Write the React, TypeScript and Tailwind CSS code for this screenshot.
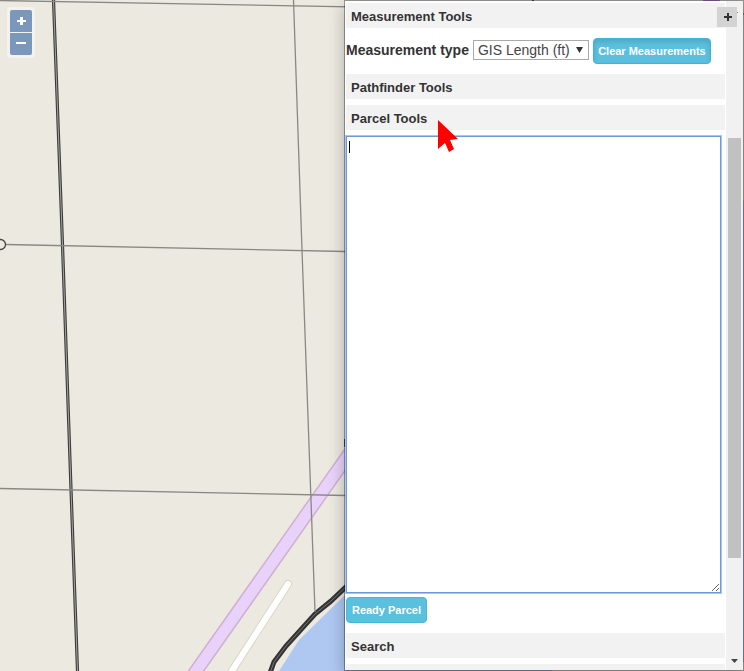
import type { ReactNode } from 'react';

function MapCanvas() {
  return (
    <svg
      className="absolute inset-0 h-full w-full"
      viewBox="0 0 744 671"
      preserveAspectRatio="xMinYMin slice"
      fill="none"
      aria-hidden="true"
    >
      <rect width="744" height="671" fill="#ece9e1" />

      {/* Water */}
      <path d="M279 671 L299 640 L346 594 L744 200 V662 H552 V671 Z" fill="#aec8f2" />

      {/* Runway */}
      <path d="M189 681 L354 447" stroke="#d0aed2" strokeWidth="14" />
      <path d="M189 681 L354 447" stroke="#e8d2f9" strokeWidth="11" />
      <path d="M703 0 H720" stroke="#b77fd6" strokeWidth="4" />

      {/* Service road */}
      <path d="M226 680 L288 584" stroke="#ddd5c3" strokeWidth="8" strokeLinecap="round" />
      <path d="M226 680 L288 584" stroke="#ffffff" strokeWidth="6" strokeLinecap="round" />

      {/* Shore road */}
      <path d="M270 673 L274 662 L286 646 L315 614 L331 601 L350 583" stroke="#333333" strokeWidth="5" />
      <path d="M270 673 L274 662 L286 646 L315 614 L331 601 L350 583" stroke="#777777" strokeWidth="1" />

      {/* Section lines */}
      <path d="M53.500 0 L62.500 245 L71 489 L77.500 671" stroke="#3c3c3c" strokeWidth="3.200" />
      <path d="M53.500 0 L62.500 245 L71 489 L77.500 671" stroke="#a4a4a0" strokeWidth="1" />
      <g stroke="#888884" strokeWidth="1.300">
        <path d="M0 0.500 L744 14" />
        <path d="M6 244.500 L345 251.500" />
        <path d="M0 488.500 L345 495.500" />
        <path d="M293.500 0 L302 250 L315 612" />
      </g>
      <path d="M533 0 V8" stroke="#555555" strokeWidth="2" />
      <path d="M345 439 V447" stroke="#555555" strokeWidth="2" />
      <circle cx="0.500" cy="244.500" r="5" stroke="#444444" strokeWidth="1.300" />
    </svg>
  );
}

function ZoomControls() {
  return (
    <div className="absolute top-[7px] left-[7px] flex flex-col gap-px rounded-sm bg-white/40 p-[3px]">
      <button
        type="button"
        aria-label="Zoom in"
        className="flex h-[22px] w-[22px] items-center justify-center rounded-t-xs bg-[#7b98bc]"
      >
        <svg width="10" height="10" viewBox="0 0 10 10" fill="#fff">
          <path d="M4 1 H7 V4 H10 V6 H7 V9 H4 V6 H1 V4 H4 Z" />
        </svg>
      </button>
      <button
        type="button"
        aria-label="Zoom out"
        className="flex h-[22px] w-[22px] items-center justify-center rounded-b-xs bg-[#7b98bc]"
      >
        <svg width="10" height="10" viewBox="0 0 10 10" fill="#fff">
          <path d="M0 3 H10 V5 H0 Z" />
        </svg>
      </button>
    </div>
  );
}

function SectionHeader({ children }: { children: ReactNode }) {
  return (
    <h3 className="h-[25px] shrink-0 bg-[#f2f2f2] px-[5px] text-[13px] leading-[27px] font-bold text-[#333]">
      {children}
    </h3>
  );
}

function ScrollBar() {
  return (
    <div className="flex w-[17px] shrink-0 flex-col items-center bg-[#f1f1f1]" aria-hidden="true">
      <svg className="mt-2 shrink-0" width="7" height="4" viewBox="0 0 7 4" fill="#333">
        <path d="M0 4 L3.500 0 L7 4 Z" />
      </svg>
      <div className="flex min-h-0 w-full flex-1 flex-col items-center pt-[125px]">
        <div className="h-[420px] w-[13px] bg-[#c1c1c1]" />
      </div>
      <svg className="mb-[7px] shrink-0" width="7" height="4" viewBox="0 0 7 4" fill="#444">
        <path d="M0 0 H7 L3.500 4 Z" />
      </svg>
    </div>
  );
}

export default function App() {
  return (
    <div className="relative flex h-screen overflow-hidden font-['Liberation_Sans',Arial,sans-serif] text-[#333]">
      <MapCanvas />
      <ZoomControls />

      <aside className="relative ml-auto flex w-[400px] max-w-full border border-black/35 bg-white bg-clip-padding shadow-[0_5px_15px_rgba(0,0,0,0.25)]">
        <div className="flex min-w-0 flex-1 flex-col overflow-hidden pt-[2px] pr-px pl-px">
          <SectionHeader>Measurement Tools</SectionHeader>

          <div className="flex shrink-0 items-start gap-1 py-[10px]">
            <div className="flex h-6 items-center gap-1">
              <label htmlFor="measurement-type" className="text-[14px] leading-5 font-bold whitespace-nowrap">
                Measurement type
              </label>
              <div className="relative w-[116px] shrink-0">
                <select
                  id="measurement-type"
                  className="block h-5 w-full appearance-none border border-[#a9a9a9] bg-white pl-1 text-[14px] leading-[18px] text-[#444]"
                >
                  <option>GIS Length (ft)</option>
                </select>
                <svg
                  className="pointer-events-none absolute top-[7px] right-[6px]"
                  width="7"
                  height="6"
                  viewBox="0 0 7 6"
                  fill="#333"
                >
                  <path d="M0 0 H7 L3.500 6 Z" />
                </svg>
              </div>
            </div>
            <button
              type="button"
              className="h-[26px] w-[118px] shrink-0 rounded-[4px] border border-[#3db5d8] bg-[#5bc0de] text-[11px] font-bold whitespace-nowrap text-white shadow-[inset_0_3px_5px_rgba(0,0,0,0.125)]"
            >
              Clear Measurements
            </button>
          </div>

          <div className="flex shrink-0 flex-col gap-[6px]">
            <SectionHeader>Pathfinder Tools</SectionHeader>
            <SectionHeader>Parcel Tools</SectionHeader>
          </div>

          <div className="relative mt-[6px] mr-1 shrink-0">
            <textarea
              aria-label="Parcel description"
              className="block h-[457px] w-full resize border border-[#6f97dc] bg-white p-[2px] text-[13px] leading-4 caret-transparent outline-1 outline-[#a9c5f5]"
            />
            {/* Text caret */}
            <span className="pointer-events-none absolute top-[5px] left-[3px] h-3 w-px bg-black" />
          </div>

          <div className="flex shrink-0 pt-1 pb-[10px]">
            <button
              type="button"
              className="h-[26px] w-[81px] rounded-[4px] border border-[#46b8da] bg-[#5bc0de] text-[11px] font-bold text-white"
            >
              Ready Parcel
            </button>
          </div>

          <SectionHeader>Search</SectionHeader>
          <div className="mt-[6px] h-[25px] bg-[#f2f2f2]" />
        </div>

        <ScrollBar />

        <button
          type="button"
          aria-label="Add tool"
          className="absolute top-[6px] right-[6px] flex h-5 w-5 items-center justify-center bg-[#d3d3d3]"
        >
          <svg width="10" height="8" viewBox="0 0 10 8" fill="#333">
            <path d="M5 0 H7 V3 H10 V5 H7 V8 H5 V5 H2 V3 H5 Z" />
          </svg>
        </button>

        {/* Mouse pointer */}
        <svg
          className="pointer-events-none absolute top-[119px] left-[93px]"
          width="21"
          height="32"
          viewBox="0 0 21 32"
          fill="#ff0000"
          aria-hidden="true"
        >
          <path d="M0 0 L20 19 L12 20 L16 29 L11 32 L7 23 L0 29 Z" />
        </svg>
      </aside>
    </div>
  );
}
